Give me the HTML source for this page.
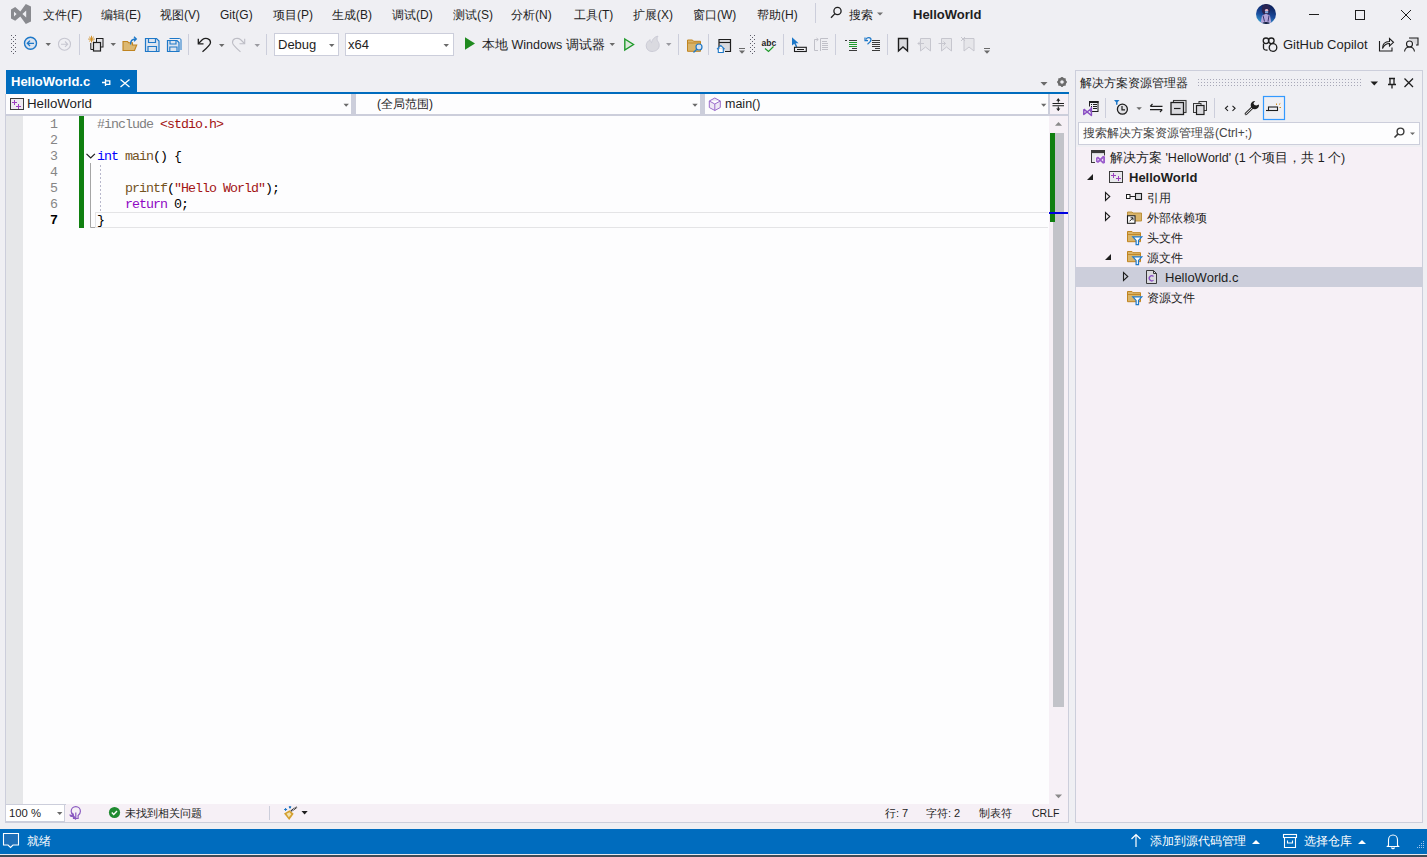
<!DOCTYPE html>
<html><head><meta charset="utf-8">
<style>
*{margin:0;padding:0;box-sizing:border-box}
html,body{width:1427px;height:857px;overflow:hidden}
body{background:#EFEFF3;font-family:"Liberation Sans",sans-serif;font-size:12px;color:#1E1E1E;position:relative}
.a{position:absolute}
.t{position:absolute;white-space:nowrap;line-height:16px}
.menu span{position:absolute;top:7px;white-space:nowrap;line-height:16px;font-size:12px}
.code{position:absolute;left:97px;font-family:"Liberation Mono",monospace;font-size:13.3px;letter-spacing:-0.98px;line-height:16px;white-space:pre;color:#000;margin-top:1px}
.ln{position:absolute;margin-top:1px;left:30px;width:27px;text-align:right;font-family:"Liberation Mono",monospace;font-size:13.3px;letter-spacing:-0.98px;line-height:16px;color:#858585}
#ov{position:absolute;left:0;top:0}
</style></head><body>

<!-- ============ MENU ============ -->
<div class="menu">
<span style="left:43px">文件(F)</span>
<span style="left:101px">编辑(E)</span>
<span style="left:160px">视图(V)</span>
<span style="left:220px">Git(G)</span>
<span style="left:273px">项目(P)</span>
<span style="left:332px">生成(B)</span>
<span style="left:392px">调试(D)</span>
<span style="left:453px">测试(S)</span>
<span style="left:511px">分析(N)</span>
<span style="left:574px">工具(T)</span>
<span style="left:633px">扩展(X)</span>
<span style="left:693px">窗口(W)</span>
<span style="left:757px">帮助(H)</span>
<span style="left:849px">搜索</span>
<span style="left:913px;font-weight:bold;font-size:13px">HelloWorld</span>
</div>

<!-- ============ TOOLBAR ============ -->
<div class="a" style="left:274px;top:33px;width:65px;height:23px;background:#fff;border:1px solid #CCCEDB"></div>
<div class="a" style="left:345px;top:33px;width:109px;height:23px;background:#fff;border:1px solid #CCCEDB"></div>
<div class="t" style="left:278px;top:37px;font-size:13px">Debug</div>
<div class="t" style="left:348px;top:37px;font-size:13px">x64</div>
<div class="t" style="left:482px;top:37px;font-size:12.5px">本地 Windows 调试器</div>
<div class="t" style="left:1283px;top:37px;font-size:13px">GitHub Copilot</div>

<!-- ============ TAB ROW ============ -->
<div class="a" style="left:6px;top:70px;width:131px;height:24px;background:#006CBE"></div>
<div class="a" style="left:6px;top:92px;width:1063px;height:2px;background:#006CBE"></div>
<div class="t" style="left:11px;top:74px;color:#fff;font-weight:bold;font-size:13px">HelloWorld.c</div>

<!-- ============ EDITOR PANEL ============ -->
<div class="a" style="left:5px;top:94px;width:1064px;height:729px;background:#F6F0F6;border:1px solid #CCCEDB;border-top:none"></div>
<!-- nav bar -->
<div class="a" style="left:6px;top:94px;width:1062px;height:20px;background:#FDFDFE"></div>
<div class="a" style="left:6px;top:114px;width:1062px;height:2px;background:#CCCEDB"></div>
<div class="a" style="left:351px;top:94px;width:5px;height:20px;background:#CCCEDB"></div>
<div class="a" style="left:700px;top:94px;width:5px;height:20px;background:#CCCEDB"></div>
<div class="a" style="left:1048px;top:94px;width:2px;height:20px;background:#CCCEDB"></div>
<div class="a" style="left:1050px;top:94px;width:18px;height:20px;background:#F6F0F6"></div>
<div class="t" style="left:27px;top:96px;font-size:13.3px">HelloWorld</div>
<div class="t" style="left:377px;top:96px;font-size:12px">(全局范围)</div>
<div class="t" style="left:725px;top:96px;font-size:12.5px">main()</div>

<!-- editor -->
<div class="a" style="left:6px;top:116px;width:1043px;height:688px;background:#FDFDFE"></div>
<div class="a" style="left:6px;top:116px;width:17px;height:688px;background:#E6E7E9"></div>
<div class="a" style="left:6px;top:804px;width:60px;height:1px;background:#CCCEDB"></div>
<!-- current line box -->
<div class="a" style="left:95px;top:212px;width:953px;height:16px;border:1px solid #E4E4E6;border-right:none"></div>
<!-- green change bar -->
<div class="a" style="left:79px;top:116px;width:5px;height:112px;background:#108010"></div>

<div class="ln" style="top:116px">1</div>
<div class="ln" style="top:132px">2</div>
<div class="ln" style="top:148px">3</div>
<div class="ln" style="top:164px">4</div>
<div class="ln" style="top:180px">5</div>
<div class="ln" style="top:196px">6</div>
<div class="ln" style="top:212px;color:#000;font-weight:bold">7</div>

<div class="code" style="top:116px"><span style="color:#808080">#include</span> <span style="color:#A31515">&lt;stdio.h&gt;</span></div>
<div class="code" style="top:148px"><span style="color:#0000FF">int</span> <span style="color:#74531F">main</span>() {</div>
<div class="code" style="top:180px">    <span style="color:#74531F">printf</span>(<span style="color:#A31515">"Hello World"</span>);</div>
<div class="code" style="top:196px">    <span style="color:#8F08C4">return</span> 0;</div>
<div class="code" style="top:212px">}</div>

<!-- scrollbar -->
<div class="a" style="left:1053px;top:133px;width:11px;height:574px;background:#C2C3C9"></div>
<div class="a" style="left:1050px;top:133px;width:5px;height:89px;background:#108010"></div>
<div class="a" style="left:1049px;top:212px;width:19px;height:2px;background:#0000E0"></div>

<!-- editor bottom bar -->
<div class="a" style="left:6px;top:805px;width:59px;height:17px;background:#fff;border-right:1px solid #CCCEDB;border-bottom:1px solid #CCCEDB"></div>
<div class="t" style="left:9px;top:805px;font-size:11.3px">100 %</div>
<div class="t" style="left:125px;top:805px;font-size:11px">未找到相关问题</div>
<div class="a" style="left:269px;top:806px;width:1px;height:14px;background:#CCCEDB"></div>
<div class="t" style="left:885px;top:805px;font-size:11px">行: 7</div>
<div class="t" style="left:926px;top:805px;font-size:11px">字符: 2</div>
<div class="t" style="left:979px;top:805px;font-size:11px">制表符</div>
<div class="t" style="left:1032px;top:805px;font-size:10.5px">CRLF</div>

<!-- ============ SOLUTION EXPLORER ============ -->
<div class="a" style="left:1075px;top:70px;width:348px;height:753px;background:#EFEFF3;border:1px solid #CCCEDB"></div>
<div class="a" style="left:1076px;top:147px;width:346px;height:675px;background:#F6F0F6"></div>
<div class="t" style="left:1080px;top:75px">解决方案资源管理器</div>
<div class="a" style="left:1078px;top:122px;width:342px;height:23px;background:#FDFDFE;border:1px solid #CCCEDB"></div>
<div class="t" style="left:1083px;top:125px;color:#444">搜索解决方案资源管理器(Ctrl+;)</div>
<div class="a" style="left:1076px;top:267px;width:346px;height:20px;background:#CCCEDB"></div>
<div class="t" style="left:1110px;top:150px;font-size:12.5px">解决方案 'HelloWorld' (1 个项目，共 1 个)</div>
<div class="t" style="left:1129px;top:170px;font-weight:bold;font-size:13px">HelloWorld</div>
<div class="t" style="left:1147px;top:190px">引用</div>
<div class="t" style="left:1147px;top:210px">外部依赖项</div>
<div class="t" style="left:1147px;top:230px">头文件</div>
<div class="t" style="left:1147px;top:250px">源文件</div>
<div class="t" style="left:1165px;top:270px;font-size:13px">HelloWorld.c</div>
<div class="t" style="left:1147px;top:290px">资源文件</div>

<!-- ============ STATUS BAR ============ -->
<div class="a" style="left:0;top:829px;width:1427px;height:25px;background:#006CBE"></div>
<div class="a" style="left:0;top:854px;width:1427px;height:1px;background:#E6E8EE"></div>
<div class="a" style="left:0;top:855px;width:1427px;height:2px;background:#404B55"></div>
<div class="t" style="left:27px;top:833px;color:#fff">就绪</div>
<div class="t" style="left:1150px;top:833px;color:#fff">添加到源代码管理</div>
<div class="t" style="left:1304px;top:833px;color:#fff">选择仓库</div>

<svg id="ov" width="1427" height="857" viewBox="0 0 1427 857">
<defs>
<linearGradient id="avg" x1="0.6" y1="0" x2="0.3" y2="1"><stop offset="0" stop-color="#0B1C55"/><stop offset="0.55" stop-color="#1A4A9C"/><stop offset="1" stop-color="#38A8D8"/></linearGradient>
<pattern id="dots" width="3" height="3" patternUnits="userSpaceOnUse"><rect x="1" y="1" width="1" height="1" fill="#A8A8B8"/></pattern>
</defs>
<!-- VS logo -->
<path fill="#898A8F" fill-rule="evenodd" d="M11 9.6L15.2 7L20.3 11.6L25.8 4L31 6.6V21.4L25.8 24L20.3 16.6L15.2 20.8L11 18.4Z M14 11.8V16.4L16.6 14.1Z M26.2 10.6L22.4 14.1L26.2 17.6Z"/>
<!-- menu separator -->
<rect x="815" y="3" width="1" height="20" fill="#CCCEDB"/>
<!-- search magnifier -->
<g fill="none" stroke="#1E1E1E" stroke-width="1.3"><circle cx="837.5" cy="11" r="3.6"/><path d="M835 13.6L831 17.8"/></g>
<path d="M877 12.5h6l-3 3z" fill="#717171"/>
<!-- avatar -->
<clipPath id="avc"><circle cx="1266" cy="14" r="10"/></clipPath>
<g clip-path="url(#avc)">
<rect x="1256" y="4" width="20" height="20" fill="url(#avg)"/>
<ellipse cx="1266" cy="9.5" rx="4.2" ry="5.5" fill="#2A2452"/>
<ellipse cx="1266.6" cy="10.2" rx="1.6" ry="1.2" fill="#E4B4C4"/>
<rect x="1265" y="11.2" width="3.2" height="2" fill="#80A8DC"/>
<path d="M1260.5 24L1262 15.5L1266 13.8L1270 15.5L1271.5 24z" fill="#B0A4D8"/>
<path d="M1263 15.5l1.5 6M1269 15.5l-1 6" stroke="#3A3470" stroke-width="1"/>
<ellipse cx="1266" cy="23.5" rx="3.5" ry="1.5" fill="#0A1838"/>
</g>
<!-- window controls -->
<g fill="none" stroke="#1E1E1E" stroke-width="1">
<path d="M1309 14.5h10"/>
<rect x="1355.5" y="10.5" width="9" height="9"/>
<path d="M1401 10L1411 20M1411 10L1401 20"/>
</g>

<!-- ===== toolbar ===== -->
<g fill="#5E5E6A">
<rect x="11" y="35" width="1" height="1"/><rect x="15" y="35" width="1" height="1"/><rect x="13" y="37" width="1" height="1"/>
<rect x="11" y="39" width="1" height="1"/><rect x="15" y="39" width="1" height="1"/><rect x="13" y="41" width="1" height="1"/>
<rect x="11" y="43" width="1" height="1"/><rect x="15" y="43" width="1" height="1"/><rect x="13" y="45" width="1" height="1"/>
<rect x="11" y="47" width="1" height="1"/><rect x="15" y="47" width="1" height="1"/><rect x="13" y="49" width="1" height="1"/>
<rect x="11" y="51" width="1" height="1"/><rect x="15" y="51" width="1" height="1"/><rect x="13" y="53" width="1" height="1"/>
</g>
<g fill="#5E5E6A">
<rect x="750" y="35" width="1" height="1"/><rect x="754" y="35" width="1" height="1"/><rect x="752" y="37" width="1" height="1"/>
<rect x="750" y="39" width="1" height="1"/><rect x="754" y="39" width="1" height="1"/><rect x="752" y="41" width="1" height="1"/>
<rect x="750" y="43" width="1" height="1"/><rect x="754" y="43" width="1" height="1"/><rect x="752" y="45" width="1" height="1"/>
<rect x="750" y="47" width="1" height="1"/><rect x="754" y="47" width="1" height="1"/><rect x="752" y="49" width="1" height="1"/>
<rect x="750" y="51" width="1" height="1"/><rect x="754" y="51" width="1" height="1"/><rect x="752" y="53" width="1" height="1"/>
</g>
<!-- back / forward -->
<circle cx="30.5" cy="43.3" r="6" fill="#DCE4EF" stroke="#1E78C8" stroke-width="1.4"/>
<path d="M34 43.3H27.5M30 40.6L27.3 43.3L30 46" fill="none" stroke="#1E78C8" stroke-width="1.3"/>
<circle cx="64.5" cy="44.2" r="6" fill="none" stroke="#C6C6D0" stroke-width="1.1"/>
<path d="M61 44.2H67.5M65 41.5L67.7 44.2L65 46.9" fill="none" stroke="#C6C6D0" stroke-width="1.1"/>
<!-- dropdown triangles -->
<g fill="#6A6A6A">
<path d="M45.5 43h5.5l-2.75 3z"/>
<path d="M110.5 43h5.5l-2.75 3z"/>
<path d="M219 44h5.5l-2.75 3z"/>
<path d="M254.5 44h5.5l-2.75 3z" fill="#9A9AA0"/>
<path d="M609.5 43h5.5l-2.75 3z"/>
<path d="M666 43h5.5l-2.75 3z" fill="#9A9AA0"/>
<path d="M329 44h5.5l-2.75 3z"/>
<path d="M443.5 44h5.5l-2.75 3z"/>
</g>
<!-- separators -->
<g fill="#CCCEDB">
<rect x="79" y="34" width="1" height="21"/><rect x="188" y="34" width="1" height="21"/><rect x="266" y="34" width="1" height="21"/>
<rect x="678" y="34" width="1" height="21"/><rect x="708" y="34" width="1" height="21"/><rect x="783" y="34" width="1" height="21"/>
<rect x="835" y="34" width="1" height="21"/><rect x="887" y="34" width="1" height="21"/>
</g>
<!-- new project -->
<g>
<path d="M91.5 35.8V42.4M88.2 39.1H94.8M89.2 36.8L93.8 41.4M93.8 36.8L89.2 41.4" stroke="#D08A1A" stroke-width="0.9"/>
<rect x="96.5" y="38.5" width="6.5" height="8.5" fill="#E4E4E8" stroke="#1E1E1E" stroke-width="1"/>
<rect x="93.5" y="42.5" width="7" height="8.5" fill="#E4E4E8" stroke="#1E1E1E" stroke-width="1.2"/>
<path d="M90.8 43V49.5H93" fill="none" stroke="#1E1E1E" stroke-width="1"/>
</g>
<!-- open folder -->
<path d="M123 41.5h4.5l1 1.2h4v2.3h4.2l-2.2 5.5H123z" fill="#DCB872" stroke="#C08420" stroke-width="1.1"/>
<path d="M130.5 44.5c0-4 2-5.5 5-5.5M134 36.8l2.3 2.2l-2.3 2.2" fill="none" stroke="#1E78C8" stroke-width="1.3"/>
<!-- save -->
<path d="M145.5 38.5h11l2.5 2.5v10.5h-13.5z" fill="#DCE4EF" stroke="#1E78C8" stroke-width="1.2"/>
<path d="M148.5 38.5v4h7v-4M148 51.5v-5h8.5v5" fill="none" stroke="#1E78C8" stroke-width="1.2"/>
<path d="M169.5 38.5h10.2c0.6 0 1.3 0.7 1.3 1.3V50" fill="none" stroke="#1E78C8" stroke-width="1"/>
<path d="M167.5 40.5h9.5l2 2v9h-11.5z" fill="#DCE4EF" stroke="#1E78C8" stroke-width="1.2"/>
<path d="M170 40.5v3.5h6v-3.5M169.8 51.5v-4.5h7.2v4.5" fill="none" stroke="#1E78C8" stroke-width="1.1"/>
<!-- undo / redo -->
<path d="M198.5 43.5L202.5 39.5C205 37.5 210.5 38 210.5 42.5C210.5 45 207 48 202.5 51.8" fill="none" stroke="#1E1E1E" stroke-width="1.3"/>
<path d="M198.3 38.8V43.8H203.5" fill="none" stroke="#1E1E1E" stroke-width="1.3"/>
<path d="M244.5 43.5L240.5 39.5C238 37.5 232.5 38 232.5 42.5C232.5 45 236 48 240.5 51.8" fill="none" stroke="#BDBDC5" stroke-width="1.1"/>
<path d="M244.7 38.8V43.8H239.5" fill="none" stroke="#BDBDC5" stroke-width="1.1"/>
<!-- play -->
<path d="M465 37.2L475 43.5L465 49.8z" fill="#1F8A1F"/>
<path d="M624.8 39L633.5 44.5L624.8 50z" fill="#DCE8DC" stroke="#1F9A2A" stroke-width="1.4"/>
<!-- flame -->
<path d="M652 51.5c-3.5 0-5.8-2.5-5.8-5.8c0-3 2-5 4-6c-0.3 1.5 0.5 2.8 1.3 3c0.5-3 3-6 6.5-6.6c-1.5 2-1.2 4 0 5.5c1 1.3 1.2 2.4 1.2 4c0 3.5-3.5 5.9-7.2 5.9z" fill="#DADAE0" stroke="#C8C8D4" stroke-width="0.9"/>
<!-- folder search -->
<path d="M687.5 40h5l1 1.3h7v10h-13z" fill="#D9B46A" stroke="#C08420" stroke-width="1"/>
<path d="M687.5 43h13" stroke="#C08420" stroke-width="0.9"/>
<circle cx="699" cy="47" r="3" fill="#DCE4EF" stroke="#1E78C8" stroke-width="1.2"/>
<path d="M696.8 49.3L693.5 52.5" stroke="#1E78C8" stroke-width="1.3"/>
<!-- window home -->
<path d="M719 48.5V39.5h11.5v12H725" fill="#DADADE" stroke="#1E1E1E" stroke-width="1.2"/>
<path d="M719 42.5h11.5" stroke="#1E1E1E" stroke-width="1.1"/>
<path d="M717 49.2L720.8 45.6L724.6 49.2M718.3 48.3v4.2h5V48.3" fill="#fff" stroke="#1E78C8" stroke-width="1.1"/>
<!-- overflow -->
<g fill="#6A6A6A"><rect x="739" y="48" width="6" height="1"/><path d="M739 50.5h6l-3 3.2z"/><rect x="984" y="48" width="6" height="1"/><path d="M984 50.5h6l-3 3.2z"/></g>
<!-- abc check -->
<text x="761.5" y="46" font-family="Liberation Sans" font-size="8.5" font-weight="bold" fill="#1E1E1E">abc</text>
<path d="M765 48.5L768.5 51.5L773.5 46.5" fill="none" stroke="#1F9A2A" stroke-width="1.2"/>
<!-- cursor box -->
<path d="M792 37.3V45.5L794.3 43.8L796 47.3L797.3 46.6L795.7 43.2H798.6z" fill="#1E78C8"/>
<rect x="794.5" y="47.3" width="11.8" height="4.2" fill="none" stroke="#1E1E1E" stroke-width="1.1"/>
<rect x="797" y="49" width="7" height="1" fill="#1E1E1E"/>
<!-- gray doc icon -->
<g fill="none" stroke="#C0C0C8" stroke-width="1">
<path d="M818 39.5h-3.5v11h3.5M816.5 38l1.8 1.5l-1.8 1.5"/>
<path d="M820.5 51V38.5h7.5"/>
</g>
<g fill="#C0C0C8"><rect x="822" y="41" width="5" height="1"/><rect x="822" y="43" width="6" height="1"/><rect x="822" y="45" width="6" height="1"/><rect x="822" y="47" width="6" height="1"/><rect x="822" y="49" width="6" height="1"/></g>
<!-- comment -->
<g fill="#3A3A3A"><rect x="845" y="40" width="2" height="1"/><rect x="849" y="40" width="8" height="1"/><rect x="852" y="48" width="5" height="1"/><rect x="849" y="50" width="8" height="1"/></g>
<g fill="#1F9A2A"><rect x="849" y="42" width="8" height="1"/><rect x="849" y="44" width="8" height="1"/><rect x="849" y="46" width="8" height="1"/></g>
<!-- uncomment -->
<g fill="#3A3A3A"><rect x="872" y="40" width="8" height="1"/><rect x="872" y="42" width="8" height="1"/><rect x="872" y="44" width="8" height="1"/><rect x="872" y="46" width="8" height="1"/><rect x="875" y="48" width="5" height="1"/><rect x="872" y="50" width="8" height="1"/></g>
<g stroke-width="1.2">
<path d="M866 39.5c1-2.5 5-2.5 5 0.3c0 1.5-1.5 3-3.5 4.5" fill="none" stroke="#1E78C8"/>
<path d="M865 37.6v3h3" fill="none" stroke="#1E78C8"/>
</g>
<!-- bookmarks -->
<path d="M898.5 38.5h9v12.5l-4.5-4l-4.5 4z" fill="#DADADE" stroke="#1E1E1E" stroke-width="1.4"/>
<g fill="#E6E6EA" stroke="#C6C6CE" stroke-width="1">
<path d="M920.5 38.5h10v12.5l-5-4l-5 4z"/><path d="M918 43.5h6M920 41.5l-2 2l2 2" fill="none"/>
<path d="M941.5 38.5h10v12.5l-5-4l-5 4z"/><path d="M938.5 43.5h7M943.5 41.5l2 2l-2 2" fill="none"/>
<path d="M964 38.5h10v12.5l-5-4l-5 4z"/><path d="M961 37l4 4M965 37l-4 4" fill="none"/>
</g>
<!-- copilot -->
<g fill="none" stroke="#1E1E1E" stroke-width="1.3">
<circle cx="1266" cy="40.8" r="2.8"/><circle cx="1271.3" cy="40.8" r="2.8"/>
<path d="M1263.5 43.5v4.5c0 1.5 2 2.5 4 2"/>
<circle cx="1273" cy="47.5" r="3.8" fill="#EFEFF3"/>
</g>
<!-- share -->
<path d="M1379.5 41v10h12.5v-3.5" fill="none" stroke="#1E1E1E" stroke-width="1.1"/>
<path d="M1382.5 48.5c0-5 3-7 7-7v-3l4 3.8l-4 3.7v-2.5c-3 0-5.5 1.5-7 5z" fill="none" stroke="#1E1E1E" stroke-width="1.1"/>
<!-- feedback -->
<path d="M1409 38h9v7h-2" fill="#DADADE" stroke="#1E1E1E" stroke-width="1.1"/>
<circle cx="1409.5" cy="44" r="3" fill="#EFEFF3" stroke="#1E1E1E" stroke-width="1.1"/>
<path d="M1404.5 51.5c0.5-3 2.5-4.5 5-4.5s4.5 1.5 5 4.5" fill="none" stroke="#1E1E1E" stroke-width="1.1"/>

<!-- ===== tab row ===== -->
<g fill="none" stroke="#fff" stroke-width="1.3">
<path d="M102 82.5h3.5M105.5 79v7M105.5 80.8h4.3v3.6h-4.3"/>
<path d="M120.5 79.5L129.5 87M129.5 79.5L120.5 87"/>
</g>
<path d="M1040.5 82h7l-3.5 3.7z" fill="#6A6A6A"/>
<g transform="translate(1062 82)">
<circle r="3.4" fill="none" stroke="#6A6A6A" stroke-width="2"/>
<g stroke="#6A6A6A" stroke-width="1.6"><path d="M0-4.9V4.9M-4.9 0H4.9M-3.5-3.5L3.5 3.5M3.5-3.5L-3.5 3.5"/></g>
<circle r="1.8" fill="#EFEFF3"/>
</g>

<!-- ===== nav bar ===== -->
<rect x="10.5" y="98.5" width="13" height="11" fill="#EEEAF0" stroke="#3A3A3A" stroke-width="1"/>
<g fill="#9B3FC0"><rect x="12" y="102" width="5" height="1"/><rect x="14" y="100" width="1" height="5"/><rect x="16" y="106" width="5" height="1"/><rect x="18" y="104" width="1" height="5"/></g>
<g fill="#6A6A6A">
<path d="M343.5 103.8h5.4l-2.7 3z"/><path d="M692.3 103.8h5.4l-2.7 3z"/><path d="M1041 103.8h5.4l-2.7 3z"/>
</g>
<path d="M714.8 98l5.5 3v6.5l-5.5 3l-5.5-3v-6.5z M709.3 101l5.5 3l5.5-3 M714.8 104v6.5" fill="#EEE8F4" stroke="#9A6CCB" stroke-width="1"/>
<g stroke="#1E1E1E" fill="#1E1E1E">
<path d="M1052.5 103.5h11.5M1052.5 105.7h11.5" stroke-width="1.1"/>
<path d="M1058.3 98.8v3.8M1058.3 106.5v4" stroke-width="1.1"/>
<path d="M1056.2 100.8l2.1-2.6l2.1 2.6z M1056.2 108.5l2.1 2.6l2.1-2.6z" stroke="none"/>
</g>

<!-- ===== editor decorations ===== -->
<path d="M86.5 153.8L90.7 158L94.9 153.8" fill="none" stroke="#1E1E1E" stroke-width="1.2"/>
<path d="M90.5 163V227.5H95" fill="none" stroke="#A5A5A5" stroke-width="1"/>
<path d="M100.5 165V211" stroke="#B8B8CC" stroke-width="1" stroke-dasharray="2 2"/>
<path d="M1055 125.7h7l-3.5-3.7z" fill="#8A8A8A"/>
<path d="M1055 794.5h7l-3.5 3.7z" fill="#8A8A8A"/>

<!-- ===== editor bottom bar ===== -->
<path d="M57 812h5.4l-2.7 3z" fill="#6A6A6A"/>
<g fill="none" stroke="#8A5AC0" stroke-width="1.2">
<path d="M73.5 815.5c-1.5-1-2.3-2.5-2.3-4.3a4.6 4.6 0 0 1 9.2 0c0 1.8-0.8 3.3-2.3 4.3v3h-4.6z"/>
<path d="M75.8 812.5v6"/>
</g>
<path d="M69.5 814.3a2.3 2.3 0 0 0 3 2.6l3 3l1.3-1.3l-3-3a2.3 2.3 0 0 0-2.6-3l1.3 1.4l-0.8 0.9z" fill="#8A5AC0"/>

<circle cx="114.5" cy="812.5" r="5.6" fill="#1F8A30"/>
<path d="M111.8 812.6l1.9 1.9l3.3-3.4" fill="none" stroke="#fff" stroke-width="1.4"/>
<path d="M291 811l5.8-3.8" stroke="#2A2A2A" stroke-width="2" stroke-dasharray="1 0.6"/>
<path d="M284 813.5l5.5-3.3l4.2 3.5l-4.5 6.3z" fill="#D4A030"/>
<path d="M286.5 813.8l3-1.6l1.8 2l-2.5 3z" fill="#F2E2B0"/>
<path d="M285.6 808v3M284.1 809.5h3M289 806.8l1 1.5l1-1.5z" stroke="#1E78C8" stroke-width="1"/>
<path d="M301.5 811h6.2l-3.1 3.5z" fill="#1E1E1E"/>

<!-- ===== solution explorer header ===== -->
<rect x="1196" y="79" width="165" height="7" fill="url(#dots)"/>
<path d="M1370.5 81.5h7.5l-3.75 4z" fill="#1E1E1E"/>
<g fill="none" stroke="#1E1E1E" stroke-width="1.3">
<path d="M1389 78.5h6M1390 78.5v6h4v-6M1388 84.5h8M1392 84.5v4"/>
<path d="M1404.5 78.5L1413 87M1413 78.5L1404.5 87"/>
</g>
<!-- SE toolbar -->
<rect x="1089.5" y="101.5" width="8.5" height="10" fill="#EFEFF3" stroke="#1E1E1E" stroke-width="1"/>
<rect x="1089" y="101" width="9.5" height="2" fill="#1E1E1E"/>
<g fill="#1E1E1E"><rect x="1091" y="104" width="1" height="1"/><rect x="1093" y="104" width="4" height="1"/><rect x="1091" y="106" width="1" height="1"/><rect x="1093" y="106" width="4" height="1"/><rect x="1091" y="108" width="1" height="1"/><rect x="1093" y="108" width="4" height="1"/></g>
<rect x="1082.5" y="106.5" width="8" height="10" fill="#EFEFF3"/>
<path d="M1083.8 109.2v5.3l7.6-5.8v-1.2l0 8l-7.6-6.3" fill="none" stroke="#8A4FC4" stroke-width="1.5" stroke-linejoin="round"/>
<rect x="1105" y="98" width="1" height="20" fill="#CCCEDB"/>
<path d="M1114 100h5.5l-2 2.2v2.6h-1.5v-2.6z" fill="#1E78C8"/>
<circle cx="1122.4" cy="109.2" r="5" fill="#E2E2E6" stroke="#1E1E1E" stroke-width="1.3"/>
<path d="M1122 106v3.8h3" fill="none" stroke="#1E1E1E" stroke-width="1.2"/>
<path d="M1136.4 107.2h5.5l-2.75 2.8z" fill="#6A6A6A"/>
<g fill="none" stroke="#1E1E1E" stroke-width="1.2">
<path d="M1150.5 106.3h12M1152.5 104l-2.3 2.3M1150 109.7h12.2M1160 112l2.3-2.3"/>
</g>
<rect x="1173.5" y="100.5" width="12.5" height="12" fill="none" stroke="#3A3A3A" stroke-width="1.1"/>
<rect x="1171" y="102.5" width="12.5" height="12" fill="#DADADE" stroke="#1E1E1E" stroke-width="1.3"/>
<path d="M1174 108.5h6.5" stroke="#1E1E1E" stroke-width="1.2"/>
<rect x="1199" y="101.5" width="7.5" height="9" fill="#E6E6EA" stroke="#3A3A3A" stroke-width="1"/>
<rect x="1193.5" y="103.5" width="7.5" height="9" fill="#E6E6EA" stroke="#3A3A3A" stroke-width="1"/>
<rect x="1196.5" y="105.5" width="7.5" height="9" fill="#DADADE" stroke="#1E1E1E" stroke-width="1.2"/>
<rect x="1214" y="98" width="1" height="20" fill="#CCCEDB"/>
<path d="M1228 105.8l-2.6 2.5l2.6 2.5M1232.5 105.8l2.6 2.5l-2.6 2.5" fill="none" stroke="#1E1E1E" stroke-width="1.1"/>
<path d="M1246 113.8l7.5-7.2" stroke="#3A3A3A" stroke-width="2.8" stroke-linecap="round"/>
<path d="M1246 113.8l7.5-7.2" stroke="#E6E6EA" stroke-width="1" stroke-linecap="round"/>
<path d="M1259 104.5a4.2 4.2 0 1 1-3.8-3.6l-1.8 2.4l1 1.8l2 0.4z" fill="#1E1E1E"/>
<rect x="1263.5" y="96.5" width="21" height="23" fill="none" stroke="#3399FF" stroke-width="1.2"/>
<rect x="1268.5" y="107" width="9" height="3.5" fill="none" stroke="#1E1E1E" stroke-width="1.1"/>
<path d="M1266 110.5h3" stroke="#1E1E1E" stroke-width="1.1"/>
<path d="M1276.5 103.5v1.5M1279 104.5l1.3-1M1279.5 107.5h1.5" stroke="#D09020" stroke-width="1"/>

<!-- SE search icon -->
<circle cx="1400.5" cy="131.5" r="3.4" fill="none" stroke="#3A3A3A" stroke-width="1.4"/>
<path d="M1398.1 133.9l-3.6 3.6" stroke="#3A3A3A" stroke-width="1.6"/>
<path d="M1410 132.5h5l-2.5 2.6z" fill="#6A6A6A"/>

<!-- ===== tree ===== -->
<!-- solution -->
<rect x="1091.5" y="150.5" width="13" height="12" fill="#E8E8EC" stroke="#3A3A3A" stroke-width="1"/>
<rect x="1091.5" y="150.5" width="13" height="2.6" fill="#3A3A3A"/>
<rect x="1095" y="155.5" width="10.5" height="8" fill="#F6F0F6"/>
<path fill="#9A5CCC" fill-rule="evenodd" d="M1096 157.8L1098 156.6L1100.3 158.4L1103 155.8L1105 156.6V163L1103 163.8L1100.3 161.2L1098 163L1096 161.8Z M1097.6 158.5V160.9L1099.1 159.7Z M1103.2 158.2V161.6L1101.5 159.9Z"/>
<!-- project -->
<path d="M1087 180h6v-6z" fill="#1E1E1E"/>
<rect x="1109.5" y="171.5" width="13" height="11" fill="#E8E8EC" stroke="#3A3A3A" stroke-width="1"/>
<g fill="#9B3FC0"><rect x="1111" y="175" width="5" height="1"/><rect x="1113" y="173" width="1" height="5"/><rect x="1116" y="178" width="5" height="1"/><rect x="1118" y="176" width="1" height="5"/></g>
<!-- expanders -->
<g fill="none" stroke="#1E1E1E" stroke-width="1.1">
<path d="M1105.5 192.5v8l4.3-4z"/>
<path d="M1105.5 212.5v8l4.3-4z"/>
<path d="M1123.5 272.5v8l4.3-4z"/>
</g>
<path d="M1105 260h6v-6z" fill="#1E1E1E"/>
<!-- ref -->
<rect x="1126.5" y="194.5" width="3.5" height="4" fill="#fff" stroke="#1E1E1E" stroke-width="1"/>
<path d="M1130 196.5h5.5" stroke="#1E1E1E" stroke-width="1"/>
<rect x="1135.5" y="193.5" width="6" height="6" fill="#DADADE" stroke="#1E1E1E" stroke-width="1.1"/>
<!-- ext deps folder -->
<path d="M1127.5 212h4.5l1 1h8.5v8h-14z" fill="#D9B46A" stroke="#B88A30" stroke-width="0.9"/>
<rect x="1127.5" y="215.8" width="7.5" height="7.5" fill="#fff" stroke="#1E1E1E" stroke-width="1.1"/>
<path d="M1129.5 221.3l3.5-3.5M1130.5 217.8h2.5v2.5" fill="none" stroke="#1E1E1E" stroke-width="1"/>
<!-- filter folders -->
<g id="ff">
<path d="M1127.5 231.5h4.5l1 1.2h7.5v9h-13z" fill="#D9B46A" stroke="#C08420" stroke-width="1"/>
<path d="M1127.5 234.5h13" stroke="#C08420" stroke-width="0.9"/>
<path d="M1132.8 236.8h9l-3.3 3.6v4.3h-2.4v-4.3z" fill="#fff" stroke="#1E78C8" stroke-width="1.2"/>
</g>
<use href="#ff" y="20"/>
<use href="#ff" y="60"/>
<!-- c file -->
<path d="M1146.5 270.5h7l3 3v10h-10z" fill="#DADADE" stroke="#3A3A3A" stroke-width="1"/>
<path d="M1153.5 270.5v3h3" fill="none" stroke="#3A3A3A" stroke-width="1"/>
<path d="M1153.5 276.5a2.5 2.5 0 1 0 0 3.6" fill="none" stroke="#8A4FC4" stroke-width="1.3"/>

<!-- ===== status bar icons ===== -->
<path d="M3.5 833.5h15v11.5h-5.5l-2.5 2.5l-2.5-2.5H3.5z" fill="#1D6FB8" stroke="#fff" stroke-width="1.1"/>
<path d="M1136 847V834.5M1131.5 839l4.5-4.5l4.5 4.5" fill="none" stroke="#fff" stroke-width="1.2"/>
<path d="M1252 844h8l-4-4z" fill="#fff"/>
<path d="M1358 844h8l-4-4z" fill="#fff"/>
<g fill="none" stroke="#fff" stroke-width="1.1">
<rect x="1283.5" y="834.5" width="13" height="3"/>
<path d="M1284.5 837.5v10h11v-10M1287.5 840.5v2.5h5v-2.5"/>
</g>
<path d="M1388.5 845.5v-5.5c0-3 2-5 4.5-5s4.5 2 4.5 5v5.5l1 1h-11z M1391.5 847.5c0.5 1.5 2.5 1.5 3 0" fill="none" stroke="#fff" stroke-width="1.1"/>
<g fill="#9CC4EC">
<rect x="1423" y="841" width="1" height="1"/><rect x="1421" y="843" width="1" height="1"/><rect x="1423" y="843" width="1" height="1"/>
<rect x="1419" y="845" width="1" height="1"/><rect x="1421" y="845" width="1" height="1"/><rect x="1423" y="845" width="1" height="1"/>
<rect x="1417" y="847" width="1" height="1"/><rect x="1419" y="847" width="1" height="1"/><rect x="1421" y="847" width="1" height="1"/><rect x="1423" y="847" width="1" height="1"/>
</g>
</svg>
</body></html>
